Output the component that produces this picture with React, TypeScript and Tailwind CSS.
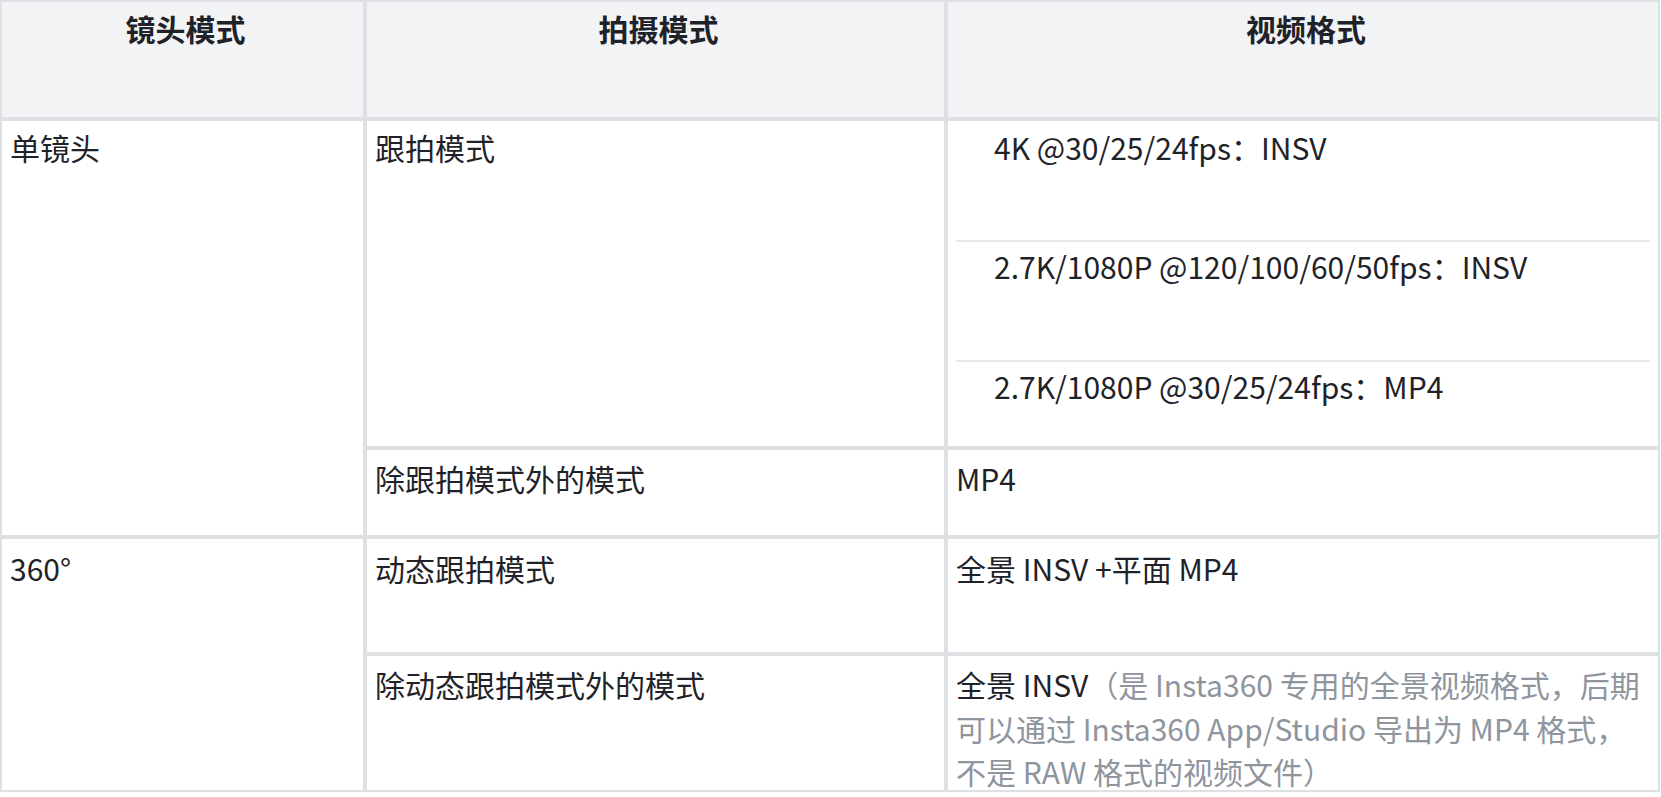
import * as React from "react";

// 镜头模式 × 拍摄模式 → 视频格式 对照表
const head =
  "border-2 border-[#dee0e3] bg-[#f2f3f5] pl-[14px] pr-2 pt-[5px] text-center font-bold text-[#1f2329]";
const cell = "border-2 border-[#dee0e3] bg-white px-2";

const trackFormats = [
  { text: "4K @30/25/24fps：INSV", cls: "h-[121px] border-b-2 border-[#e6e7ea] pt-[5px]" },
  { text: "2.7K/1080P @120/100/60/50fps：INSV", cls: "h-[120px] border-b-2 border-[#e6e7ea] pt-[3px]" },
  { text: "2.7K/1080P @30/25/24fps：MP4", cls: "flex-1 pt-[3px]" },
];

export default function App() {
  return (
    <div className="min-h-screen w-full bg-white font-['Noto_Sans_CJK_SC','Noto_Sans',sans-serif] text-[30px] leading-[43.5px] text-[#1f2329]">
      <div className="grid w-[1660px] grid-cols-[365px_581px_714px] grid-rows-[119px_329px_89px_117px_138px]">
        <div className={head}>镜头模式</div>
        <div className={head}>拍摄模式</div>
        <div className={head}>视频格式</div>

        <div className={`${cell} row-span-2 pt-[5px]`}>单镜头</div>
        <div className={`${cell} pt-[5px]`}>跟拍模式</div>
        <div className={`${cell} flex flex-col px-0`}>
          {trackFormats.map((f) => (
            <div key={f.text} className={`${f.cls} pl-[38px]`}>
              {f.text}
            </div>
          ))}
        </div>

        <div className={`${cell} pt-[7px]`}>除跟拍模式外的模式</div>
        <div className={`${cell} pt-[7px]`}>MP4</div>

        <div className={`${cell} row-span-2 pt-[8px]`}>360°</div>
        <div className={`${cell} pt-[8px]`}>动态跟拍模式</div>
        <div className={`${cell} pt-[8px]`}>全景 INSV +平面 MP4</div>

        <div className={`${cell} pt-[7px]`}>除动态跟拍模式外的模式</div>
        <div className={`${cell} pt-[7px]`}>
          全景 INSV
          <span className="text-[#8f959e]">
            （是 Insta360 专用的全景视频格式，后期
            <br />
            可以通过 Insta360 App/Studio 导出为 MP4 格式，
            <br />
            不是 RAW 格式的视频文件）
          </span>
        </div>
      </div>
    </div>
  );
}
